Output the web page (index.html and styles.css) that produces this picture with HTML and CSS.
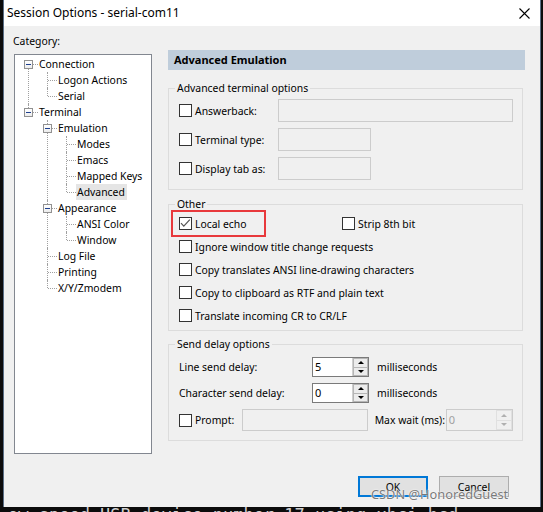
FILE: index.html
```html
<!DOCTYPE html>
<html>
<head>
<meta charset="utf-8">
<link rel="stylesheet" href="styles.css">
</head>
<body>
<div class="screen">
  <div class="window">
    <div class="titlebar">
      <span class="title">Session Options - serial-com11</span>
      <svg class="close" width="11" height="11" viewBox="0 0 11 11"><path d="M0.5 0.5 L10.5 10.5 M10.5 0.5 L0.5 10.5" stroke="#000" stroke-width="1.1" fill="none"/></svg>
    </div>
    <div class="content">
      <div class="left">
        <div class="cat-label">Category:</div>
        <div class="tree-box">
          <ul class="tree">
            <li><div class="row"><span class="exp"></span><span class="lbl">Connection</span></div>
              <ul>
                <li><div class="row"><span class="lbl">Logon Actions</span></div></li>
                <li><div class="row"><span class="lbl">Serial</span></div></li>
              </ul>
            </li>
            <li><div class="row"><span class="exp"></span><span class="lbl">Terminal</span></div>
              <ul>
                <li><div class="row"><span class="exp"></span><span class="lbl">Emulation</span></div>
                  <ul>
                    <li><div class="row"><span class="lbl">Modes</span></div></li>
                    <li><div class="row"><span class="lbl">Emacs</span></div></li>
                    <li><div class="row"><span class="lbl">Mapped Keys</span></div></li>
                    <li><div class="row"><span class="lbl sel">Advanced</span></div></li>
                  </ul>
                </li>
                <li><div class="row"><span class="exp"></span><span class="lbl">Appearance</span></div>
                  <ul>
                    <li><div class="row"><span class="lbl">ANSI Color</span></div></li>
                    <li><div class="row"><span class="lbl">Window</span></div></li>
                  </ul>
                </li>
                <li><div class="row"><span class="lbl">Log File</span></div></li>
                <li><div class="row"><span class="lbl">Printing</span></div></li>
                <li><div class="row"><span class="lbl">X/Y/Zmodem</span></div></li>
              </ul>
            </li>
          </ul>
        </div>
      </div>

      <div class="right">
        <div class="header">Advanced Emulation</div>

        <fieldset class="group g-term">
          <legend>Advanced terminal options</legend>
          <div class="frow">
            <label class="cb w-term"><span class="box"></span>Answerback:</label>
            <span class="field w-answer"></span>
          </div>
          <div class="frow">
            <label class="cb w-term"><span class="box"></span>Terminal type:</label>
            <span class="field w-short"></span>
          </div>
          <div class="frow">
            <label class="cb w-term"><span class="box"></span>Display tab as:</label>
            <span class="field w-short"></span>
          </div>
        </fieldset>

        <fieldset class="group g-other">
          <legend>Other</legend>
          <div class="crow">
            <label class="cb w-echo highlight"><span class="box checked"><svg width="13" height="13" viewBox="0 0 13 13"><path d="M2 6.2 L4.8 9.2 L10.8 2.6" stroke="#555" stroke-width="1.2" fill="none"/></svg></span>Local echo</label>
            <label class="cb"><span class="box"></span>Strip 8th bit</label>
          </div>
          <div class="crow"><label class="cb"><span class="box"></span>Ignore window title change requests</label></div>
          <div class="crow"><label class="cb"><span class="box"></span>Copy translates ANSI line-drawing characters</label></div>
          <div class="crow"><label class="cb"><span class="box"></span>Copy to clipboard as RTF and plain text</label></div>
          <div class="crow"><label class="cb"><span class="box"></span>Translate incoming CR to CR/LF</label></div>
        </fieldset>

        <fieldset class="group g-delay">
          <legend>Send delay options</legend>
          <div class="drow">
            <span class="dlabel">Line send delay:</span>
            <span class="spin"><span class="spin-val">5</span><span class="spin-btns"><span class="sb"><i class="up"></i></span><span class="sb"><i class="down"></i></span></span></span>
            <span class="unit">milliseconds</span>
          </div>
          <div class="drow">
            <span class="dlabel">Character send delay:</span>
            <span class="spin"><span class="spin-val">0</span><span class="spin-btns"><span class="sb"><i class="up"></i></span><span class="sb"><i class="down"></i></span></span></span>
            <span class="unit">milliseconds</span>
          </div>
          <div class="drow prow">
            <label class="cb w-prompt"><span class="box"></span>Prompt:</label>
            <span class="field w-prompt-in"></span>
            <span class="maxlbl">Max wait (ms):</span>
            <span class="spin disabled"><span class="spin-val">0</span><span class="spin-btns"><span class="sb"><i class="up"></i></span><span class="sb"><i class="down"></i></span></span></span>
          </div>
        </fieldset>
      </div>
    </div>
    <div class="footer">
      <button class="btn ok">OK</button>
      <button class="btn">Cancel</button>
    </div>
    <div class="watermark">CSDN @HonoredGuest</div>
  </div>
  <div class="term">ow speed USB device number 17 using xhci_hcd</div>
</div>
</body>
</html>
```
FILE: styles.css
```css
* { box-sizing: border-box; }
html, body { margin: 0; padding: 0; }
body {
  background: #0c0c0c;
  font-family: "Noto Sans", "Liberation Sans", sans-serif;
  font-size: 10.4px;
  color: #000;
  width: 543px;
  height: 512px;
  overflow: hidden;
}
.screen { width: 543px; height: 512px; overflow: hidden; }

.window {
  position: relative;
  margin-left: 3px;
  width: 538px;
  height: 507px;
  background: #f0f0f0;
  border-left: 1px solid #5b6f86;
  border-right: 1px solid #5b6f86;
  display: flex;
  flex-direction: column;
}

.titlebar {
  height: 26px;
  background: #fff;
  display: flex;
  align-items: center;
  justify-content: space-between;
  padding: 0 10px 0 3px;
}
.title { font-size: 12px; line-height: 26px; }
.close { display: block; margin-top: 1px; }

.content {
  display: flex;
  gap: 16px;
  padding-left: 10px;
}
.left { width: 138px; display: flex; flex-direction: column; }
.cat-label { margin-top: 7px; margin-left: -1px; line-height: 16px; height: 16px; }
.tree-box {
  margin-top: 5px;
  height: 400px;
  background: #fff;
  border: 1px solid #828790;
  padding-top: 1px;
}

ul { list-style: none; margin: 0; padding: 0; }
.tree { padding-left: 4px; }
.tree ul { padding-left: 19px; }
.tree li { position: relative; }
.tree li::before {
  content: "";
  position: absolute;
  left: 9px;
  top: 0;
  height: 100%;
  border-left: 1px dotted #a0a0a0;
}
.tree li:last-child::before { height: 8px; }
.tree > li:first-child::before { top: 8px; height: calc(100% - 8px); }
.row {
  position: relative;
  height: 16px;
  line-height: 16px;
  padding-left: 19px;
  white-space: nowrap;
}
.row::before {
  content: "";
  position: absolute;
  left: 10px;
  top: 8px;
  width: 9px;
  border-top: 1px dotted #a0a0a0;
}
.exp {
  position: absolute;
  left: 5px;
  top: 4px;
  width: 9px;
  height: 9px;
  border: 1px solid #919191;
  background: linear-gradient(#ffffff, #ececec);
  z-index: 1;
}
.exp::after {
  content: "";
  position: absolute;
  left: 1px;
  top: 3px;
  width: 5px;
  height: 1px;
  background: #1d3f8e;
}
.lbl { display: inline-block; height: 16px; padding: 0 2px 0 1px; }
.lbl.sel { background: #e5e5e5; }

.right { width: 357px; padding-top: 24px; }
.header {
  height: 20px;
  line-height: 20px;
  background: #bfcddb;
  font-weight: bold;
  font-size: 11px;
  padding-left: 6px;
}

.group {
  margin: 0;
  border: 1px solid #dcdcdc;
  width: 355px;
  padding: 3px 9px 9px 10px;
  min-width: 0;
}
.group legend {
  padding: 0 2px;
  margin-left: -4px;
  line-height: 16px;
}
.g-term { margin-top: 10px; }
.g-other { margin-top: 6px; padding-bottom: 6px; }
.g-delay { margin-top: 5px; padding-top: 5px; padding-bottom: 9px; }

.frow { display: flex; align-items: center; height: 23px; }
.frow + .frow { margin-top: 6px; }

.cb { display: inline-flex; align-items: center; gap: 3px; white-space: nowrap; height: 17px; }
.box {
  width: 13px;
  height: 13px;
  border: 1px solid #333;
  background: #fff;
  flex: none;
  position: relative;
}
.box svg { position: absolute; left: -1px; top: -1px; }
.w-term { width: 99px; }
.field {
  display: block;
  height: 23px;
  border: 1px solid #cccccc;
  background: #f0f0f0;
}
.w-answer { width: 235px; }
.w-short { width: 93px; }

.crow { display: flex; align-items: center; height: 17px; }
.crow + .crow { margin-top: 6px; }
.w-echo { width: 163px; position: relative; }
.highlight::after {
  content: "";
  position: absolute;
  left: -8px;
  top: -5px;
  width: 91px;
  height: 23px;
  border: 2px solid #e8393c;
}

.drow { display: flex; align-items: center; height: 20px; }
.drow + .drow { margin-top: 6px; }
.prow { height: 22px; }
.dlabel { width: 133px; }
.spin {
  display: flex;
  width: 57px;
  height: 20px;
  border: 1px solid #7a7a7a;
  background: #fff;
}
.spin-val { flex: 1; padding-left: 2px; line-height: 18px; font-size: 11px; }
.spin-btns { width: 16px; display: flex; flex-direction: column; border-left: 1px solid #d0d0d0; }
.sb {
  flex: 1;
  display: flex;
  align-items: center;
  justify-content: center;
  background: #ececec;
  border: 1px solid #b6b6b6;
}
.sb + .sb { border-top: none; }
.up { width: 0; height: 0; border-left: 3px solid transparent; border-right: 3px solid transparent; border-bottom: 3px solid #000; }
.down { width: 0; height: 0; border-left: 3px solid transparent; border-right: 3px solid transparent; border-top: 3px solid #000; }
.unit { margin-left: 8px; }

.w-prompt { width: 64px; }
.w-prompt-in { width: 127px; height: 22px; }
.maxlbl { margin-left: 7px; width: 72px; white-space: nowrap; }
.spin.disabled {
  width: 68px;
  height: 22px;
  background: #f0f0f0;
  border-color: #cccccc;
  color: #a0a0a0;
}
.spin.disabled .spin-val { line-height: 20px; }
.spin.disabled .spin-btns { border-left: none; }
.spin.disabled .sb { background: #f0f0f0; border-color: #e0e0e0; }
.spin.disabled .up { border-bottom-color: #b0b0b0; }
.spin.disabled .down { border-top-color: #b0b0b0; }

.footer {
  margin-top: auto;
  margin-bottom: 10px;
  display: flex;
  justify-content: flex-end;
  gap: 11px;
  padding-right: 31px;
}
.btn {
  width: 70px;
  height: 21px;
  font: inherit;
  padding: 0;
  background: #e1e1e1;
  border: 1px solid #adadad;
  color: #000;
}
.btn.ok { border: 2px solid #0078d7; }

.watermark {
  position: absolute;
  left: 367px;
  top: 485px;
  font-size: 12.8px;
  line-height: 18px;
  color: #7a7a7a;
  text-shadow: 0 0 2px #fff, 0 0 1px #fff;
  white-space: nowrap;
}

.term {
  height: 5px;
  overflow: hidden;
  padding-left: 8px;
  font-family: "DejaVu Sans Mono", monospace;
  font-size: 17px;
  line-height: 17px;
  color: #d0d0d0;
  white-space: nowrap;
}
```
